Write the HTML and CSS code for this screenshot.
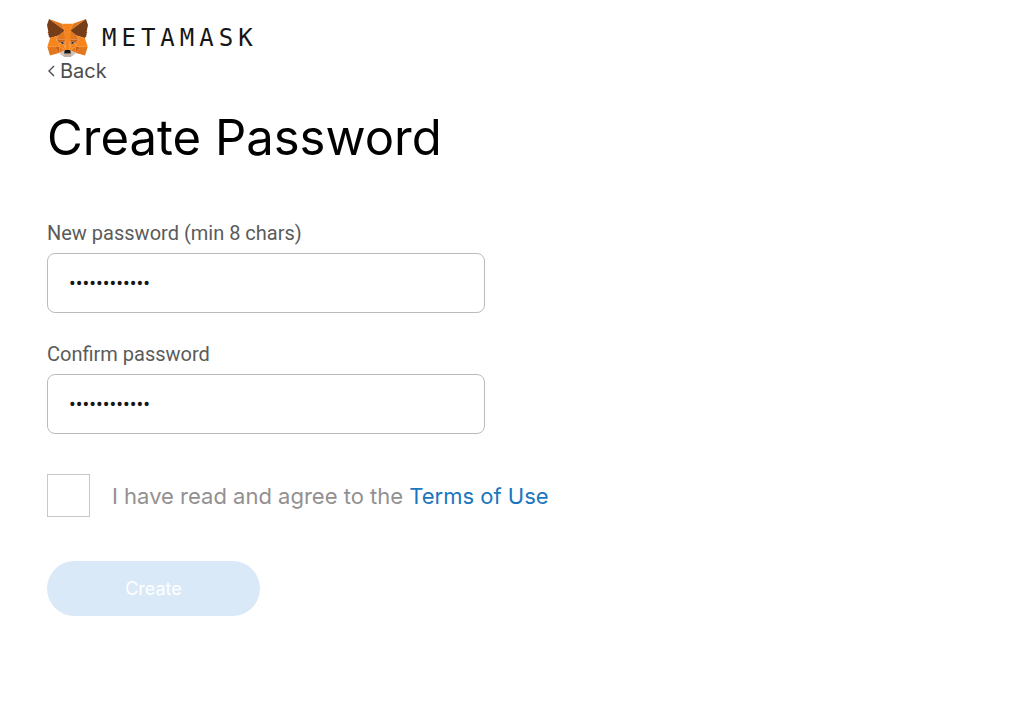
FILE: index.html
```html
<!DOCTYPE html>
<html lang="en">
<head>
<meta charset="utf-8">
<meta name="viewport" content="width=device-width, initial-scale=1">
<title>MetaMask</title>
<link rel="stylesheet" href="styles.css">
</head>
<body>
<main class="page">
  <header class="brand">
    <svg class="fox" viewBox="31.8 35.5 255 236.4" aria-hidden="true">
      <path fill="#e2761b" d="M274.1 35.5l-99.5 73.9L193 65.8z"/>
      <path fill="#e4761b" d="M44.4 35.5l98.7 74.6-17.5-44.3zM238.3 206.8l-26.5 40.6 56.7 15.6 16.3-55.3zM33.9 207.7L50.1 263l56.7-15.6-26.5-40.6zM103.6 138.2l-15.8 23.9 56.3 2.5-2-60.5zM214.9 138.2l-39-34.8-1.3 61.2 56.2-2.5zM106.8 247.4l33.8-16.5-29.2-22.8zM177.9 230.9l33.9 16.5-4.7-39.3z"/>
      <path fill="#d7c1b3" d="M211.8 247.4l-33.9-16.5 2.7 22.1-.3 9.3zM106.8 247.4l31.5 14.9-.2-9.3 2.5-22.1z"/>
      <path fill="#233447" d="M138.8 193.5l-28.2-8.3 19.9-9.1zM179.7 193.5l8.3-17.4 20 9.1z"/>
      <path fill="#cd6116" d="M106.8 247.4l4.8-40.6-31.3.9zM207 206.8l4.8 40.6 26.5-39.7zM230.8 162.1l-56.2 2.5 5.2 28.9 8.3-17.4 20 9.1zM110.6 185.2l20-9.1 8.2 17.4 5.3-28.9-56.3-2.5z"/>
      <path fill="#e4751f" d="M87.8 162.1l23.6 46-.8-22.9zM208.1 185.2l-1 22.9 23.7-46zM144.1 164.6l-5.3 28.9 6.6 34.1 1.5-44.9zM174.6 164.6l-2.7 18 1.2 45 6.7-34.1z"/>
      <path fill="#f6851b" d="M179.8 193.5l-6.7 34.1 4.8 3.3 29.2-22.8 1-22.9zM110.6 185.2l.8 22.9 29.2 22.8 4.8-3.3-6.6-34.1z"/>
      <path fill="#c0ad9e" d="M180.3 262.3l.3-9.3-2.5-2.2h-37.7l-2.3 2.2.2 9.3-31.5-14.9 11 9 22.3 15.500h38.300l22.400-15.500 11-9z"/>
      <path fill="#161616" d="M177.9 230.9l-4.8-3.300h-27.700l-4.800 3.300-2.500 22.100 2.300-2.200h37.700l2.500 2.200z"/>
      <path fill="#763d16" d="M278.3 114.2l8.5-40.8-12.7-37.9-96.2 71.4 37 31.3 52.3 15.3 11.6-13.5-5-3.6 8-7.3-6.2-4.8 8-6.1zM31.8 73.4l8.5 40.8-5.4 4 8 6.1-6.1 4.8 8 7.3-5 3.6 11.5 13.5 52.3-15.3 37-31.3-96.2-71.4z"/>
      <path fill="#f6851b" d="M267.2 153.5l-52.3-15.3 15.9 23.9-23.7 46 31.2-.4h46.5zM103.6 138.2l-52.3 15.3-17.4 54.2h46.4l31.1.4-23.6-46zM174.6 164.6l3.3-57.7 15.2-41.1h-67.5l15 41.1 3.5 57.7 1.2 18.2.1 44.8h27.7l.2-44.8z"/>
    </svg>
    <span class="wordmark">METAMASK</span>
  </header>
  <a class="back" href="#"><svg class="chevron" viewBox="0 0 8 12" aria-hidden="true"><path d="M7 1L2 6L7 11" fill="none" stroke="currentColor" stroke-width="1.400"/></svg>Back</a>
  <h1 class="title">Create Password</h1>
  <form class="form">
    <div class="field">
      <label class="label" for="new-password">New password (min 8 chars)</label>
      <input class="input" id="new-password" type="password" value="abcdefghijkl" autocomplete="new-password">
    </div>
    <div class="field">
      <label class="label" for="confirm-password">Confirm password</label>
      <input class="input" id="confirm-password" type="password" value="abcdefghijkl" autocomplete="new-password">
    </div>
    <div class="terms">
      <input class="checkbox" id="agree" type="checkbox">
      <span><label for="agree">I have read and agree to the</label> <a class="link" href="#">Terms of Use</a></span>
    </div>
    <button class="submit" type="submit" disabled>Create</button>
  </form>
</main>
</body>
</html>
```
FILE: styles.css
```css
* {
  box-sizing: border-box;
}

body {
  margin: 0;
  background: #fff;
  color: #000;
  font-family: Inter, "Liberation Sans", sans-serif;
}

.page {
  display: flex;
  flex-direction: column;
  align-items: flex-start;
  padding: 19px 47px 48px;
}

.brand {
  display: flex;
  align-items: center;
  gap: 14px;
}

.fox {
  width: 41px;
  height: 38px;
}

.wordmark {
  color: #161616;
  font-family: "DejaVu Sans Mono", monospace;
  font-size: 24px;
  line-height: 38px;
  letter-spacing: 5px;
}

.back {
  display: flex;
  align-items: center;
  gap: 5px;
  color: #4d4d4d;
  font-size: 20px;
  line-height: 28px;
  text-decoration: none;
}

.chevron {
  width: 8px;
  height: 12px;
}

.title {
  margin: 23px 0 53px;
  font-size: 49px;
  font-weight: 400;
  line-height: 60px;
}

.form {
  display: flex;
  flex-direction: column;
  align-items: flex-start;
  width: 100%;
}

.field {
  display: flex;
  flex-direction: column;
  gap: 8px;
  width: 100%;
  max-width: 438px;
  margin-bottom: 29px;
}

.label {
  color: #5b5b5b;
  font-family: Roboto, sans-serif;
  font-size: 20px;
  line-height: 24px;
}

.input {
  width: 100%;
  height: 60px;
  padding: 0 21px;
  border: 1px solid #bbb;
  border-radius: 8px;
  background: #fff;
  color: #161616;
  font-family: Roboto, sans-serif;
  font-size: 20px;
}

.terms {
  display: flex;
  align-items: center;
  gap: 22px;
  margin: 11px 0 44px;
  color: #939090;
  font-size: 22px;
  line-height: 32px;
}

.checkbox {
  flex: none;
  appearance: none;
  width: 43px;
  height: 43px;
  margin: 0;
  border: 1px solid #c8c8c8;
  background: #fff;
}

.link {
  color: #1b76c0;
  text-decoration: none;
}

.submit {
  width: 213px;
  height: 55px;
  border: 0;
  border-radius: 28px;
  background: #d9e9f8;
  color: #fff;
  font-family: inherit;
  font-size: 18px;
}
```
